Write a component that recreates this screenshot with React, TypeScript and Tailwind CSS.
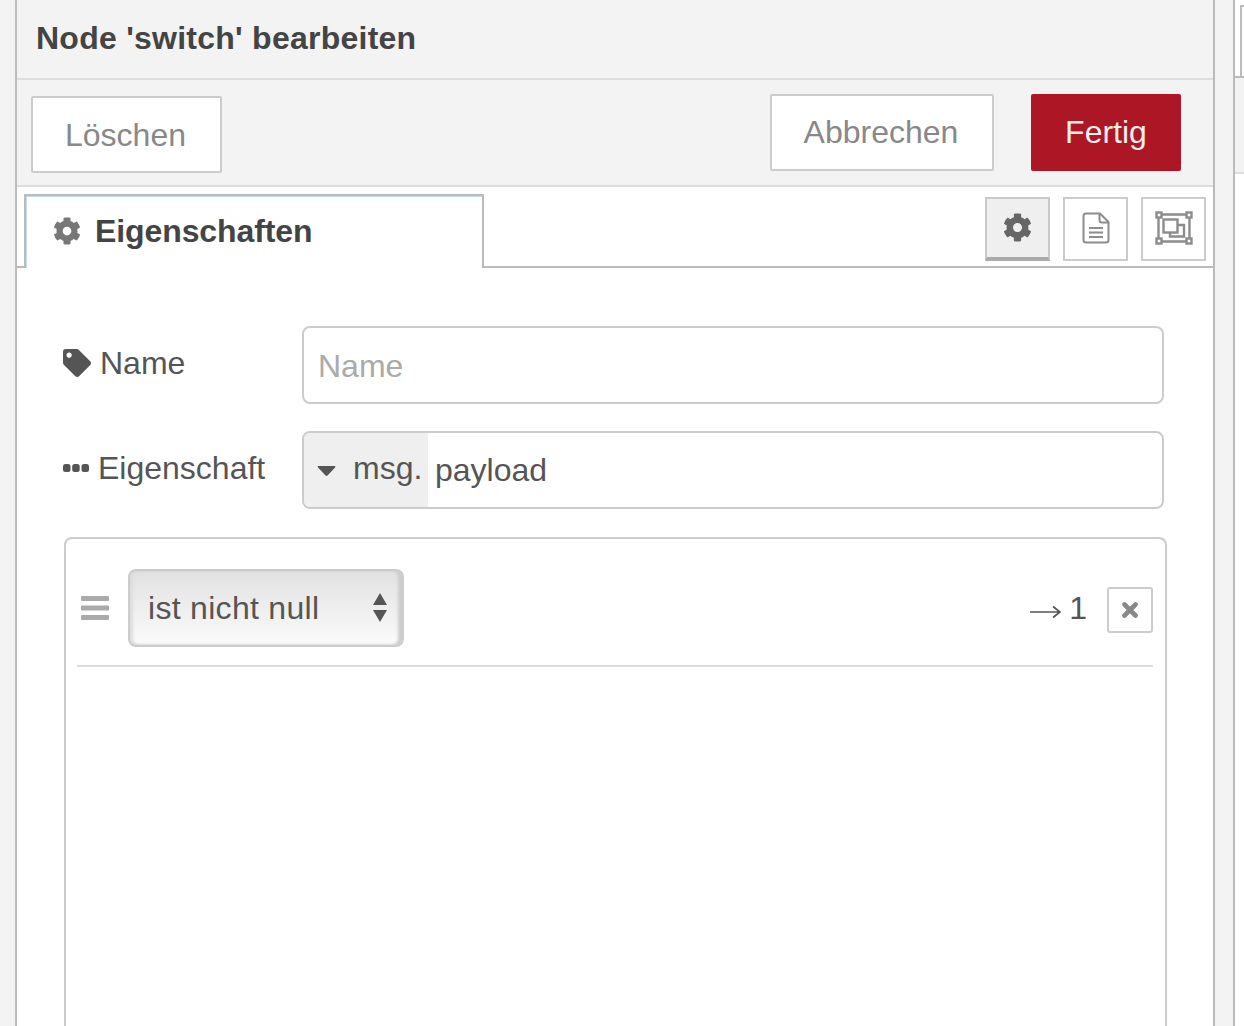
import React from "react";
import {FaCog, FaTag} from "react-icons/fa";

const FrameIcon = () => (
    <svg width="38" height="34" viewBox="0 0 38 34" fill="none" stroke="#8c8c8c" strokeWidth="2.4">
        <path d="M5 3.5H33M5 30.5H33M3.5 5V29M34.5 5V29" />
        <rect x="1.5" y="1.5" width="5" height="5" fill="#fff" />
        <rect x="31.5" y="1.5" width="5" height="5" fill="#fff" />
        <rect x="1.5" y="27.5" width="5" height="5" fill="#fff" />
        <rect x="31.5" y="27.5" width="5" height="5" fill="#fff" />
        <rect x="8.5" y="8.5" width="14" height="13" />
        <path d="M22.5 14H29V25.5H15V21.5" />
    </svg>
);

const FileIcon = () => (
    <svg width="28" height="32" viewBox="0 0 28 32" fill="none" stroke="#8c8c8c" strokeWidth="2">
        <path d="M18 1.5H4Q1.5 1.5 1.5 4V28Q1.5 30.5 4 30.5H24Q26.5 30.5 26.5 28V10Z" />
        <path d="M17.5 1.5V8Q17.5 10.5 20 10.5H26.5" />
        <path d="M7 16H21M7 20.5H21M7 25H21" />
    </svg>
);

const TrayButton = ({active, children}: {active?: boolean; children: React.ReactNode}) => (
    <div
        className={
            active
                ? "flex h-[64px] w-[65px] items-center justify-center border-2 border-b-[4px] border-[#c9c9c9] border-b-[#aaaaaa] bg-[#efefef] pb-[2px] text-[#666666]"
                : "flex h-[64px] w-[65px] items-center justify-center border-2 border-[#cccccc] bg-white pb-[2px] text-[#8c8c8c]"
        }
    >
        {children}
    </div>
);

export default function App() {
    return (
        <div className="flex h-[1026px] w-[1244px] overflow-hidden bg-white font-['Liberation_Sans',Arial,sans-serif] text-[#555555]">
            <div className="w-[15px] shrink-0 bg-[#f3f3f3]" />

            <div className="flex w-[1200px] shrink-0 flex-col border-x-2 border-[#bbbbbb]">
                <div className="flex h-[80px] shrink-0 items-center border-b-2 border-[#dddddd] bg-[#f3f3f3] pb-[2px] pl-[19px] text-[32px] font-bold tracking-[0.25px] text-[#444444]">
                    Node 'switch' bearbeiten
                </div>

                <div className="flex h-[107px] shrink-0 items-start justify-between border-b-2 border-[#dddddd] bg-[#f3f3f3] pl-[14px] pr-[32px] pt-[14px]">
                    <button className="mt-[2px] h-[77px] w-[191px] rounded-[2px] border-2 border-[#cccccc] bg-white pr-[2px] text-[32px] text-[#888888]">
                        Löschen
                    </button>
                    <div className="flex gap-[37px]">
                        <button className="h-[77px] w-[224px] rounded-[2px] border-2 border-[#cccccc] bg-white pb-[1px] pr-[2px] text-[32px] text-[#888888]">
                            Abbrechen
                        </button>
                        <button className="h-[77px] w-[150px] rounded-[2px] bg-[#ad1625] pb-[2px] text-[32px] text-[#eeeeee]">
                            Fertig
                        </button>
                    </div>
                </div>

                <div className="flex h-[81px] shrink-0 items-start justify-between border-b-2 border-[#bbbbbb] pl-[7px] pr-[7px] pt-[7px]">
                    <div className="relative z-10 flex h-[74px] w-[460px] items-center gap-[14px] border-x-2 border-t-2 border-[#bbbbbb] bg-white pb-[3px] pl-[27px] text-[32px] font-bold tracking-[-0.1px] text-[#444444] shadow-[inset_0_1px_0_#c4d9ee,inset_1px_0_0_#c4d9ee]">
                        <FaCog className="text-[#777777]" size={28} />
                        Eigenschaften
                    </div>
                    <div className="mt-[3px] flex gap-[13px]">
                        <TrayButton active><FaCog size={29} /></TrayButton>
                        <TrayButton><FileIcon /></TrayButton>
                        <TrayButton><FrameIcon /></TrayButton>
                    </div>
                </div>

                <div className="flex min-h-0 flex-1 flex-col pl-[46px] pr-[46px] pt-[58px]">
                    <div className="flex h-[78px] shrink-0 items-center">
                        <div className="flex w-[239px] shrink-0 items-center gap-[9px] pb-[4px] text-[32px]">
                            <FaTag size={28} />
                            Name
                        </div>
                        <div className="flex h-full w-[862px] items-center rounded-[8px] border-2 border-[#cccccc] bg-white pl-[14px] pt-[2px] text-[32px] text-[#aaaaaa]">
                            Name
                        </div>
                    </div>

                    <div className="mt-[27px] flex h-[78px] shrink-0 items-center">
                        <div className="flex w-[239px] shrink-0 items-center gap-[9px] pb-[4px] text-[32px]">
                            <svg width="26" height="8" viewBox="0 0 26 8" fill="#555555">
                                <rect x="0" y="0" width="7.5" height="8" rx="2.5" />
                                <rect x="9.2" y="0" width="7.5" height="8" rx="2.5" />
                                <rect x="18.5" y="0" width="7.5" height="8" rx="2.5" />
                            </svg>
                            Eigenschaft
                        </div>
                        <div className="flex h-full w-[862px] items-stretch overflow-hidden rounded-[8px] border-2 border-[#cccccc] bg-white text-[32px]">
                            <div className="flex w-[124px] shrink-0 items-center bg-[#efefef] pb-[4px] pl-[13px]">
                                <svg width="19" height="10" viewBox="0 0 19 10" fill="#555555" className="mt-[6px]">
                                    <path d="M1.5 0H17.5Q19 0 18 1.5L10.5 9.5Q9.5 10.3 8.5 9.5L1 1.5Q0 0 1.5 0Z" />
                                </svg>
                                <span className="ml-[17px]">msg.</span>
                            </div>
                            <div className="flex items-center pl-[7px]">payload</div>
                        </div>
                    </div>

                    <div className="ml-[1px] mt-[28px] min-h-0 w-[1103px] flex-1 rounded-t-[8px] border-x-2 border-t-2 border-[#cccccc] pl-[11px] pr-[12px] pt-[30px]">
                        <div className="flex h-[98px] items-start border-b-2 border-[#dddddd] pl-[4px]">
                            <svg width="28" height="24" viewBox="0 0 28 24" fill="#aaaaaa" className="mt-[27px]">
                                <rect x="0" y="0" width="28" height="5" rx="1" />
                                <rect x="0" y="9.5" width="28" height="5" rx="1" />
                                <rect x="0" y="19" width="28" height="5" rx="1" />
                            </svg>
                            <div className="ml-[19px] flex h-[78px] w-[276px] items-center justify-between rounded-[8px] border-2 border-[#cccccc] bg-gradient-to-b from-[#e2e2e2] via-[#eeeeee] to-[#fbfbfb] pl-[18px] pr-[14px] text-[32px] tracking-[0.3px] shadow-[inset_-4px_0_3px_#cccccc,inset_3px_0_3px_#dddddd]">
                                ist nicht null
                                <svg width="16" height="30" viewBox="0 0 16 30" fill="#555555">
                                    <path d="M8 0L15 12H1Z" />
                                    <path d="M1 17H15L8 29Z" />
                                </svg>
                            </div>
                            <div className="ml-auto mt-[16px] flex items-center">
                                <svg width="31" height="14" viewBox="0 0 31 14" fill="none" stroke="#555555" strokeWidth="1.6" className="mt-[4px]">
                                    <path d="M0 7H29M23 1.5L30 7L23 12.5" />
                                </svg>
                                <span className="ml-[8px] pb-[3px] text-[32px] leading-[46px]">1</span>
                                <div className="ml-[20px] flex h-[46px] w-[46px] items-center justify-center rounded-[3px] border-2 border-[#cccccc]">
                                    <svg width="16" height="16" viewBox="0 0 16 16" stroke="#888888" strokeWidth="4.6" strokeLinecap="round">
                                        <path d="M2.5 2.5L13.5 13.5M13.5 2.5L2.5 13.5" />
                                    </svg>
                                </div>
                            </div>
                        </div>
                    </div>
                </div>
            </div>

            <div className="w-[20px] shrink-0 border-r-2 border-[#bbbbbb] bg-[#f3f3f3]" />
            <div className="flex-1">
                <div className="h-[78px] border-b-2 border-[#bbbbbb] pl-[5px] pt-[5px]">
                    <div className="h-[71px] border-l-2 border-t-2 border-[#bbbbbb]" />
                </div>
                <div className="h-[96px] border-b-2 border-[#dddddd] bg-[#f3f3f3]" />
            </div>
        </div>
    );
}
